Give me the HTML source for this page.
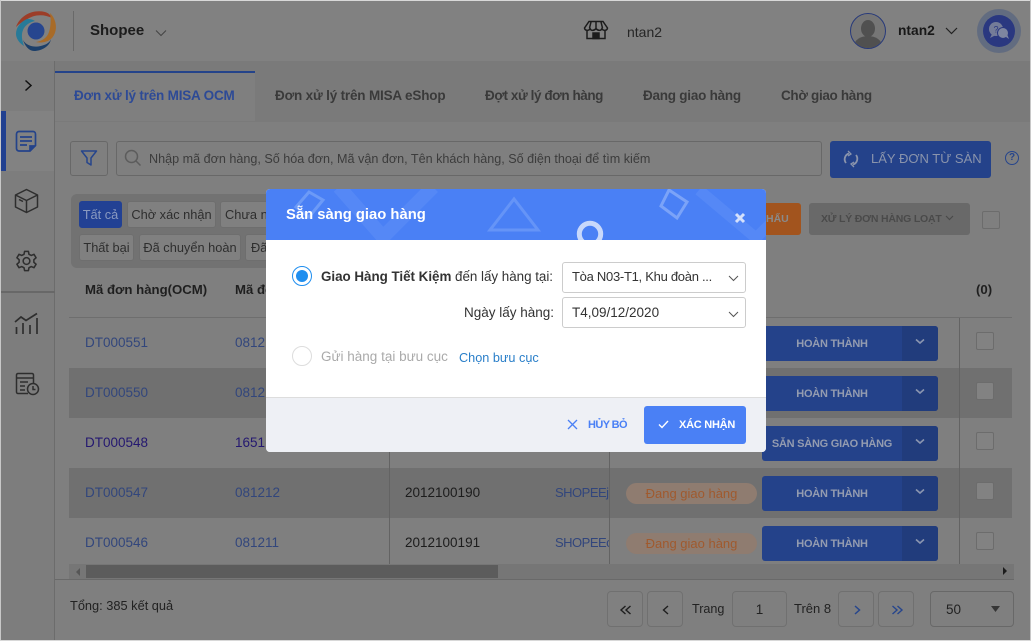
<!DOCTYPE html>
<html><head><meta charset="utf-8"><style>
*{box-sizing:border-box}
html,body{margin:0;padding:0}
body{width:1031px;height:641px;overflow:hidden;position:relative;background:#7f7f7f;font-family:"Liberation Sans",sans-serif;font-size:13px;color:#222}
.a,.t{position:absolute}
.t{white-space:nowrap;line-height:18px}
.b{font-weight:bold}
.lk{color:#32467c}
.tab{font-weight:bold;color:#3a3a3a;font-size:13.5px}
.chip{position:absolute;height:27px;background:#808080;border:1px solid #6e6e6e;border-radius:3px;line-height:25px;text-align:center;font-size:12.8px;color:#2e2e2e;white-space:nowrap;overflow:hidden}
.row{position:absolute;left:69px;width:943px;height:50px}
.act{position:absolute;left:762px;width:176px;height:35px;background:#24428a;border-radius:3px;color:#949cb0;font-weight:bold;font-size:11px;line-height:37px;overflow:hidden;letter-spacing:-.25px}
.act span{position:absolute;left:0;width:140px;text-align:center;white-space:nowrap}
.act i{position:absolute;right:0;top:0;width:36px;height:35px;background:#213c7c}
.act svg{position:absolute;right:12px;top:12px}
.cb{position:absolute;left:976px;width:18px;height:18px;border:1px solid #6c6c6c;border-radius:2px;background:#828282}
.pill{position:absolute;left:626px;width:131px;height:21px;background:#8f7c70;border-radius:11px;color:#a05a2e;text-align:center;line-height:21px;font-size:13px}
.pg{position:absolute;top:591px;width:36px;height:36px;border:1px solid #707070;border-radius:4px;background:#808080}
.pg svg{position:absolute;left:9px;top:9px}
.num{font-size:13.5px}
</style></head><body>
<!-- frame -->
<div class="a" style="left:0;top:0;width:1031px;height:61px;background:#818181"></div>
<div class="a" style="left:0;top:61px;width:55px;height:580px;background:#7d7d7d;border-right:1px solid #6c6c6c"></div>
<div class="a" style="left:55px;top:61px;width:976px;height:61px;background:#7a7a7a"></div>

<!-- logo -->
<svg class="a" style="left:14px;top:10px" width="44" height="44" viewBox="0 0 44 44">
<circle cx="22" cy="21" r="8.5" fill="#27468f"/>
<path d="M2 17 C6 6 18 -1 31 2 C35 3 37 6 38 8 C30 4 20 4 12 10 C8 12 5 14 2 17Z" fill="#9c3d28"/>
<path d="M36 3 C43 10 44 21 38 28 C33 33 26 33 22 32 C28 31 33 28 35 22 C37 16 37 9 36 3Z" fill="#a86b28"/>
<path d="M9 30 C13 37 23 38 30 35 C33 34 36 32 37 29 C36 36 28 41 20 41 C15 41 11 36 9 30Z" fill="#1c3f69"/>
<path d="M13 9 C6 12 2 18 2 24 C2 28 5 33 10 36 C8 30 7 25 9 20 C11 15 16 12 21 11 C18 9 15 9 13 9Z" fill="#287a98"/>
</svg>
<div class="a" style="left:73px;top:11px;width:1px;height:40px;background:#696969"></div>
<div class="t b" style="left:90px;top:22px;font-size:15px;color:#1c1c1c">Shopee</div>
<svg class="a" style="left:155px;top:29px" width="12" height="8" viewBox="0 0 12 8"><path d="M1 1.5 L6 6.5 L11 1.5" fill="none" stroke="#444" stroke-width="1"/></svg>

<!-- shop -->
<svg class="a" style="left:583px;top:20px" width="26" height="20" viewBox="0 0 26 20" fill="none" stroke="#1c1c1c" stroke-width="1.5">
<path d="M6 1.5 H20 L24.5 8 C24 11 20 11 19 8.5 C18 11 15 11 13 8.5 C11 11 8 11 7 8.5 C6 11 2 11 1.5 8Z"/><path d="M8 2 L6.5 8 M13 2 V8 M18 2 L19.5 8"/><path d="M4 11 V18.5 H22 V11"/><rect x="10" y="13" width="6" height="5.5" fill="#1c1c1c"/></svg>
<div class="t" style="left:627px;top:23px;font-size:14px;color:#262626">ntan2</div>

<!-- user -->
<div class="a" style="left:850px;top:13px;width:36px;height:36px;border-radius:50%;background:#767676;border:1px solid #27397a;overflow:hidden">
<div class="a" style="left:10px;top:6px;width:14px;height:17px;border-radius:50%;background:#505050"></div>
<div class="a" style="left:3px;top:22px;width:28px;height:20px;border-radius:50%;background:#505050"></div></div>
<div class="t b" style="left:898px;top:22px;font-size:13.8px;color:#181818">ntan2</div>
<svg class="a" style="left:945px;top:27px" width="13" height="8" viewBox="0 0 13 8"><path d="M1 1 L6.5 6.5 L12 1" fill="none" stroke="#222" stroke-width="1.2"/></svg>
<div class="a" style="left:977px;top:9px;width:44px;height:44px;border-radius:50%;background:#626c80"></div>
<div class="a" style="left:983px;top:15px;width:32px;height:32px;border-radius:50%;background:#2a3880"></div>
<svg class="a" style="left:987px;top:21px" width="24" height="20" viewBox="0 0 24 20">
<circle cx="9" cy="8" r="7" fill="#747c98"/><path d="M5 13 L3 17 L9 14Z" fill="#747c98"/>
<circle cx="16" cy="12" r="5.5" fill="#7e86a0" stroke="#2a3880"/><path d="M19 16 L22 18 L20 13Z" fill="#7e86a0"/>
<text x="9" y="11.5" font-size="9" fill="#2a3880" text-anchor="middle" font-family="Liberation Sans">?</text></svg>

<!-- sidebar -->
<svg class="a" style="left:24px;top:79px" width="9" height="13" viewBox="0 0 9 13"><path d="M1.5 1.5 L7 6.5 L1.5 11.5" fill="none" stroke="#111" stroke-width="1.5"/></svg>
<div class="a" style="left:0;top:111px;width:54px;height:60px;background:#828282"></div>
<div class="a" style="left:1px;top:111px;width:5px;height:60px;background:#214090"></div>
<svg class="a" style="left:15px;top:130px" width="22" height="23" viewBox="0 0 22 23" fill="none" stroke="#24438a" stroke-width="1.7">
<path d="M15 21 H4 A2.5 2.5 0 0 1 1.5 18.5 V4 A2.5 2.5 0 0 1 4 1.5 H18 A2.5 2.5 0 0 1 20.5 4 V15.5Z"/><path d="M5 7 H17 M5 11 H17 M5 15 H12"/><path d="M15 21 V16 H20.5" fill="#24438a"/></svg>
<svg class="a" style="left:14px;top:188px" width="25" height="26" viewBox="0 0 25 26" fill="none" stroke="#2e2e2e" stroke-width="1.5" stroke-linejoin="round">
<path d="M12.5 1.5 L23.5 7 V19 L12.5 24.5 L1.5 19 V7Z"/><path d="M1.5 7 L12.5 12.5 L23.5 7 M12.5 12.5 V24.5"/><path d="M5 11.5 L9 13.5"/></svg>
<svg class="a" style="left:15px;top:249px" width="23" height="24" viewBox="0 0 24 24" fill="none" stroke="#2e2e2e" stroke-width="1.6" stroke-linejoin="round">
<circle cx="12" cy="12" r="3.5"/><path d="M10 2 H14 L14.6 5 L17 6.2 L19.8 5 L22 8.6 L19.7 10.6 V13.4 L22 15.4 L19.8 19 L17 17.8 L14.6 19 L14 22 H10 L9.4 19 L7 17.8 L4.2 19 L2 15.4 L4.3 13.4 V10.6 L2 8.6 L4.2 5 L7 6.2 L9.4 5Z"/></svg>
<div class="a" style="left:1px;top:291px;width:54px;height:2px;background:#686868"></div>
<svg class="a" style="left:14px;top:312px" width="25" height="23" viewBox="0 0 25 23" fill="none" stroke="#2e2e2e" stroke-width="1.7">
<path d="M1 10 L7 5 L12 8.5 L23 1.5"/><path d="M2.5 15 V22 M9 11 V22 M16 13 V22 M23 6 V22"/></svg>
<svg class="a" style="left:15px;top:372px" width="25" height="24" viewBox="0 0 25 24" fill="none" stroke="#2e2e2e" stroke-width="1.5">
<path d="M13 21.5 H3 A1.5 1.5 0 0 1 1.5 20 V3 A1.5 1.5 0 0 1 3 1.5 H17 A1.5 1.5 0 0 1 18.5 3 V11"/><path d="M1.5 6 H18.5 M5 10 H13 M5 14 H10 M5 18 H10"/><circle cx="18" cy="17" r="5.5"/><path d="M18 14 V17.5 H20.5"/></svg>

<!-- tabs -->
<div class="a" style="left:55px;top:71px;width:200px;height:50px;background:#7f7f7f;border-top:2px solid #24438a"></div>
<div class="t tab" style="left:74px;top:87px;color:#2d4a96;letter-spacing:-.2px">Đơn xử lý trên MISA OCM</div>
<div class="t tab" style="left:275px;top:87px;letter-spacing:-.18px">Đơn xử lý trên MISA eShop</div>
<div class="t tab" style="left:485px;top:87px;letter-spacing:-.43px">Đợt xử lý đơn hàng</div>
<div class="t tab" style="left:643px;top:87px;letter-spacing:-.24px">Đang giao hàng</div>
<div class="t tab" style="left:781px;top:87px;letter-spacing:-.33px">Chờ giao hàng</div>

<!-- filter & search -->
<div class="a" style="left:70px;top:141px;width:38px;height:35px;border:1px solid #686868;border-radius:3px"></div>
<svg class="a" style="left:80px;top:149px" width="18" height="18" viewBox="0 0 18 18"><path d="M1.5 2 H16.5 L11 9 V16 L7 13.5 V9Z" fill="none" stroke="#26458c" stroke-width="1.5" stroke-linejoin="round"/></svg>
<div class="a" style="left:116px;top:141px;width:706px;height:35px;border:1px solid #686868;border-radius:3px"></div>
<svg class="a" style="left:124px;top:149px" width="18" height="18" viewBox="0 0 18 18" fill="none" stroke="#5c5c5c" stroke-width="1.5"><circle cx="7.5" cy="7.5" r="6"/><path d="M12 12 L16.5 16.5"/></svg>
<div class="t" style="left:149px;top:150px;font-size:12.6px;color:#3c3c3c">Nhập mã đơn hàng, Số hóa đơn, Mã vận đơn, Tên khách hàng, Số điện thoại để tìm kiếm</div>
<div class="a" style="left:830px;top:141px;width:161px;height:37px;background:#24428a;border-radius:3px"></div>
<svg class="a" style="left:843px;top:150px" width="16" height="18" viewBox="0 0 16 18" fill="none" stroke="#8a94ac" stroke-width="1.8"><path d="M3 13 A6 6 0 0 1 6 3.5 M13 5 A6 6 0 0 1 10 14.5"/><path d="M5 1 L8 4 L5 6 M11 17 L8 14 L11 12" stroke-width="1.3"/></svg>
<div class="t" style="left:871px;top:150px;font-size:13px;color:#8a94ac">LẤY ĐƠN TỪ SÀN</div>
<div class="a" style="left:1005px;top:151px;width:14px;height:14px;border:1.5px solid #26458c;border-radius:50%;color:#26458c;font-size:10px;line-height:11px;text-align:center;font-weight:bold">?</div>

<!-- chips panel -->
<div class="a" style="left:71px;top:194px;width:300px;height:74px;background:#727272;border-radius:6px"></div>
<div class="chip" style="left:79px;top:201px;width:43px;background:#224194;border-color:#224194;color:#8a9ac0">Tất cả</div>
<div class="chip" style="left:127px;top:201px;width:89px">Chờ xác nhận</div>
<div class="chip" style="left:220px;top:201px;width:80px;text-align:left;padding-left:4px">Chưa nhận</div>
<div class="chip" style="left:79px;top:234px;width:55px">Thất bại</div>
<div class="chip" style="left:139px;top:234px;width:102px">Đã chuyển hoàn</div>
<div class="chip" style="left:245px;top:234px;width:60px;text-align:left;padding-left:5px">Đã hủy</div>

<div class="a" style="left:740px;top:203px;width:61px;height:32px;background:#a2541e;border-radius:3px"></div>
<div class="t b" style="left:766px;top:210px;font-size:10.5px;color:#8a8a8a">HẤU</div>
<div class="a" style="left:809px;top:203px;width:161px;height:32px;background:#696969;border-radius:3px"></div>
<div class="t b" style="left:821px;top:210px;font-size:10.5px;letter-spacing:-.2px;color:#4a4a4a">XỬ LÝ ĐƠN HÀNG LOẠT</div>
<svg class="a" style="left:945px;top:215px" width="9" height="6" viewBox="0 0 9 6"><path d="M1 1 L4.5 4.5 L8 1" fill="none" stroke="#4a4a4a" stroke-width="1.2"/></svg>
<div class="a" style="left:982px;top:211px;width:18px;height:18px;border:1px solid #6c6c6c;border-radius:2px"></div>

<!-- table header -->
<div class="t b" style="left:85px;top:281px;font-size:13.2px;color:#1f1f1f">Mã đơn hàng(OCM)</div>
<div class="t b" style="left:235px;top:281px;font-size:13.2px;color:#1f1f1f">Mã đơn</div>
<div class="t b" style="left:976px;top:281px;font-size:13.2px;color:#1f1f1f">(0)</div>
<div class="a" style="left:69px;top:317px;width:943px;height:1px;background:#6e6e6e"></div>

<!-- rows -->
<div class="row" style="top:368px;background:#707070"></div>
<div class="row" style="top:468px;background:#707070"></div>
<div class="a" style="left:389px;top:318px;width:1px;height:246px;background:#636363"></div>
<div class="a" style="left:609px;top:318px;width:1px;height:246px;background:#636363"></div>
<div class="a" style="left:959px;top:318px;width:1px;height:246px;background:#636363"></div>

<div class="t lk num" style="left:85px;top:334px">DT000551</div><div class="t lk num" style="left:235px;top:334px">0812</div>
<div class="t lk num" style="left:85px;top:384px">DT000550</div><div class="t lk num" style="left:235px;top:384px">0812</div>
<div class="t num" style="left:85px;top:434px;color:#241870">DT000548</div><div class="t num" style="left:235px;top:434px;color:#241870">1651</div>
<div class="t lk num" style="left:85px;top:484px">DT000547</div><div class="t lk num" style="left:235px;top:484px">081212</div>
<div class="t num" style="left:405px;top:484px;color:#1c1c1c">2012100190</div>
<div class="a lk" style="left:555px;top:484px;width:54px;overflow:hidden;white-space:nowrap;line-height:18px;font-size:13px;letter-spacing:-.5px">SHOPEEjk</div>
<div class="pill" style="top:483px">Đang giao hàng</div>
<div class="t lk num" style="left:85px;top:534px">DT000546</div><div class="t lk num" style="left:235px;top:534px">081211</div>
<div class="t num" style="left:405px;top:534px;color:#1c1c1c">2012100191</div>
<div class="a lk" style="left:555px;top:534px;width:54px;overflow:hidden;white-space:nowrap;line-height:18px;font-size:13px;letter-spacing:-.5px">SHOPEEcd</div>
<div class="pill" style="top:533px">Đang giao hàng</div>

<div class="act" style="top:326px"><span>HOÀN THÀNH</span><i></i><svg width="12" height="8" viewBox="0 0 12 8"><path d="M2 1.5 L6 5 L10 1.5" fill="none" stroke="#8a95b0" stroke-width="1.6"/></svg></div>
<div class="act" style="top:376px"><span>HOÀN THÀNH</span><i></i><svg width="12" height="8" viewBox="0 0 12 8"><path d="M2 1.5 L6 5 L10 1.5" fill="none" stroke="#8a95b0" stroke-width="1.6"/></svg></div>
<div class="act" style="top:426px"><span>SẴN SÀNG GIAO HÀNG</span><i></i><svg width="12" height="8" viewBox="0 0 12 8"><path d="M2 1.5 L6 5 L10 1.5" fill="none" stroke="#8a95b0" stroke-width="1.6"/></svg></div>
<div class="act" style="top:476px"><span>HOÀN THÀNH</span><i></i><svg width="12" height="8" viewBox="0 0 12 8"><path d="M2 1.5 L6 5 L10 1.5" fill="none" stroke="#8a95b0" stroke-width="1.6"/></svg></div>
<div class="act" style="top:526px"><span>HOÀN THÀNH</span><i></i><svg width="12" height="8" viewBox="0 0 12 8"><path d="M2 1.5 L6 5 L10 1.5" fill="none" stroke="#8a95b0" stroke-width="1.6"/></svg></div>
<div class="cb" style="top:332px"></div><div class="cb" style="top:382px"></div><div class="cb" style="top:432px"></div><div class="cb" style="top:482px"></div><div class="cb" style="top:532px"></div>

<!-- scrollbar -->
<div class="a" style="left:69px;top:564px;width:945px;height:15px;background:#767676"></div>
<div class="a" style="left:86px;top:565px;width:412px;height:13px;background:#5c5c5c"></div>
<svg class="a" style="left:75px;top:568px" width="6" height="8"><path d="M5 0 V8 L1 4Z" fill="#565656"/></svg>
<svg class="a" style="left:1002px;top:567px" width="6" height="8"><path d="M1 0 V8 L5 4Z" fill="#1c1c1c"/></svg>
<div class="a" style="left:55px;top:579px;width:959px;height:1px;background:#696969"></div>

<!-- footer -->
<div class="t" style="left:70px;top:597px;font-size:12.8px;color:#222">Tổng: 385 kết quả</div>
<div class="pg" style="left:607px"><svg width="18" height="18" viewBox="0 0 18 18" fill="none" stroke="#1e1e1e" stroke-width="1.4"><path d="M8.5 5 L4 9 L8.5 13 M13.5 5 L9 9 L13.5 13"/></svg></div>
<div class="pg" style="left:647px"><svg width="18" height="18" viewBox="0 0 18 18" fill="none" stroke="#1e1e1e" stroke-width="1.4"><path d="M11 5 L6.5 9 L11 13"/></svg></div>
<div class="t" style="left:692px;top:600px;font-size:12.6px;color:#222">Trang</div>
<div class="a" style="left:732px;top:591px;width:55px;height:36px;border:1px solid #707070;border-radius:4px;text-align:center;line-height:35px;font-size:13.5px;color:#222">1</div>
<div class="t" style="left:794px;top:600px;font-size:13px;color:#222">Trên 8</div>
<div class="pg" style="left:838px"><svg width="18" height="18" viewBox="0 0 18 18" fill="none" stroke="#26458c" stroke-width="1.5"><path d="M7 5 L11.5 9 L7 13"/></svg></div>
<div class="pg" style="left:878px"><svg width="18" height="18" viewBox="0 0 18 18" fill="none" stroke="#26458c" stroke-width="1.4"><path d="M4.5 5 L9 9 L4.5 13 M9.5 5 L14 9 L9.5 13"/></svg></div>
<div class="a" style="left:930px;top:591px;width:84px;height:36px;border:1px solid #686868;border-radius:4px"></div>
<div class="t" style="left:946px;top:601px;font-size:13.5px;color:#222">50</div>
<svg class="a" style="left:991px;top:606px" width="10" height="6"><path d="M0 0 H9 L4.5 6Z" fill="#363636"/></svg>

<!-- outer light edge -->
<div class="a" style="left:0;top:0;width:1031px;height:1px;background:#d8d8d8"></div>
<div class="a" style="left:0;top:0;width:1px;height:641px;background:#c8c8c8"></div>
<div class="a" style="left:1030px;top:0;width:1px;height:641px;background:#c8c8c8"></div>
<div class="a" style="left:0;top:640px;width:1031px;height:1px;background:#d8d8d8"></div>

<!-- modal -->
<div class="a" style="left:266px;top:189px;width:500px;height:263px;background:#fff;border-radius:4px;overflow:hidden">
 <div class="a" style="left:0;top:0;width:500px;height:51px;background:#4a80f5;overflow:hidden">
  <svg class="a" style="left:0;top:0" width="500" height="51" viewBox="0 0 500 51" fill="none" stroke="#5588f6">
   <path d="M73 -2 L117 48 L167 -2" stroke-width="14"/>
   <path d="M43 3 L57 11 L43 28 L30 18Z" stroke="#6c9af7" stroke-width="3"/>
   <path d="M248 10 L224 41 H272Z" stroke="#6594f7" stroke-width="3"/>
   <circle cx="324" cy="45" r="10.7" stroke="#c8d8fb" stroke-width="5"/>
   <path d="M403 1 L421 13 L411 29 L395 17Z" stroke="#7ba3f8" stroke-width="3"/>
   <path d="M433 1 L490 49 L505 34" stroke-width="11"/>
  </svg>
  <div class="t b" style="left:20px;top:17px;font-size:14.8px;color:#fff">Sẵn sàng giao hàng</div>
  <svg class="a" style="left:468px;top:23px" width="12" height="12" viewBox="0 0 12 12"><path d="M2 2 L10 10 M10 2 L2 10" stroke="#d4e0fb" stroke-width="3"/></svg>
 </div>
 <div class="a" style="left:26px;top:77px;width:20px;height:20px;border:1.5px solid #1f8eef;border-radius:50%"></div>
 <div class="a" style="left:30px;top:81px;width:12px;height:12px;background:#1f8eef;border-radius:50%"></div>
 <div class="t" style="left:55px;top:79px;font-size:13.4px;letter-spacing:-.02px;color:#333"><b>Giao Hàng Tiết Kiệm</b> đến lấy hàng tại:</div>
 <div class="a" style="left:296px;top:73px;width:184px;height:31px;border:1px solid #ccc;border-radius:3px"></div>
 <div class="t" style="left:306px;top:79px;font-size:13px;letter-spacing:-.28px;color:#333">Tòa N03-T1, Khu đoàn ...</div>
 <svg class="a" style="left:462px;top:86px" width="11" height="7" viewBox="0 0 11 7"><path d="M1 1 L5.5 5.5 L10 1" fill="none" stroke="#555"/></svg>
 <div class="t" style="left:198px;top:115px;font-size:13.5px;color:#333">Ngày lấy hàng:</div>
 <div class="a" style="left:296px;top:108px;width:184px;height:31px;border:1px solid #ccc;border-radius:3px"></div>
 <div class="t" style="left:306px;top:115px;font-size:13.5px;color:#333">T4,09/12/2020</div>
 <svg class="a" style="left:462px;top:122px" width="11" height="7" viewBox="0 0 11 7"><path d="M1 1 L5.5 5.5 L10 1" fill="none" stroke="#555"/></svg>
 <div class="a" style="left:26px;top:157px;width:20px;height:20px;border:1px solid #ddd;border-radius:50%"></div>
 <div class="t" style="left:55px;top:159px;font-size:13.5px;color:#aaa">Gửi hàng tại bưu cục</div>
 <div class="t" style="left:193px;top:160px;font-size:12.7px;color:#2a7fc9">Chọn bưu cục</div>
 <div class="a" style="left:0;top:208px;width:500px;height:55px;background:#eef0f5;border-top:1px solid #ddd"></div>
 <svg class="a" style="left:301px;top:230px" width="11" height="11" viewBox="0 0 11 11"><path d="M1 1 L10 10 M10 1 L1 10" stroke="#4a80f5" stroke-width="1.3"/></svg>
 <div class="t b" style="left:322px;top:227px;font-size:11px;letter-spacing:-.6px;color:#4a80f5">HỦY BỎ</div>
 <div class="a" style="left:378px;top:217px;width:102px;height:38px;background:#4a80f5;border-radius:3px"></div>
 <svg class="a" style="left:392px;top:231px" width="11" height="9" viewBox="0 0 11 9"><path d="M1 4.5 L4 7.5 L10 1" fill="none" stroke="#fff" stroke-width="1.4"/></svg>
 <div class="t b" style="left:413px;top:227px;font-size:11px;letter-spacing:-.25px;color:#fff">XÁC NHẬN</div>
</div>
</body></html>
